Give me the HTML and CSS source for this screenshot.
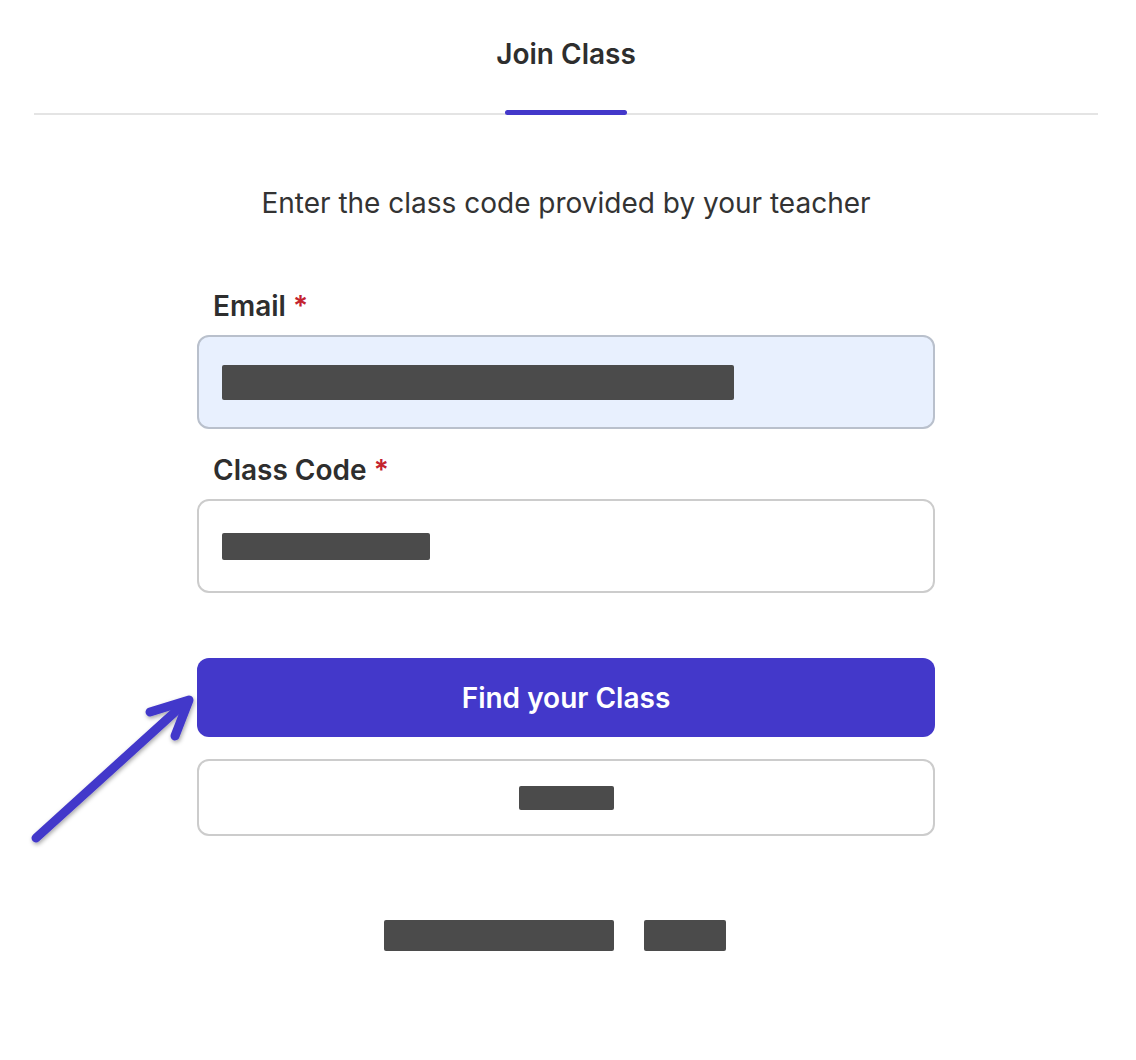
FILE: index.html
```html
<!DOCTYPE html>
<html lang="en">
  <head>
    <meta charset="UTF-8" />
    <meta name="viewport" content="width=device-width, initial-scale=1.0" />
    <title>Join Class</title>

    <link rel="stylesheet" href="styles.css">
  </head>
  <body>
    <div class="page">
      <div class="tabs">
        <div class="tab">
          <span class="tab-title">Join Class</span>
          <span class="tab-bar"></span>
        </div>
      </div>

      <p class="subtitle">Enter the class code provided by your teacher</p>

      <form class="join-form" onsubmit="return false">
        <label class="field-label">Email <span class="required">*</span></label>
        <div class="field field-filled">
          <span class="redacted" style="width: 512px"></span>
        </div>

        <label class="field-label label-code">Class Code <span class="required">*</span></label>
        <div class="field">
          <span class="redacted redacted-code" style="width: 208px"></span>
        </div>

        <button class="btn-primary" type="submit">Find your Class</button>
        <button class="btn-secondary" type="button">
          <span class="redacted redacted-small" style="width: 95px"></span>
        </button>
      </form>

      <div class="footer-links">
        <span class="redacted redacted-link" style="width: 230px"></span>
        <span class="redacted redacted-link" style="width: 82px"></span>
      </div>

      <svg class="arrow" width="1136" height="1060" viewBox="0 0 1136 1060">
        <defs>
          <filter id="shadow" x="-20%" y="-20%" width="140%" height="140%">
            <feDropShadow dx="1" dy="2" stdDeviation="2" flood-color="#000" flood-opacity="0.35" />
          </filter>
        </defs>
        <g fill="none" stroke="#4338ca" stroke-width="9" stroke-linecap="round" stroke-linejoin="round" filter="url(#shadow)">
          <path d="M36 838 L186 702" />
          <path d="M150 712 L189 700 L175 736" />
        </g>
      </svg>
    </div>
  </body>
</html>
```

FILE: styles.css
```css
body {
  margin: 0;
  font-family: Inter, "Noto Sans", sans-serif;
  color: #333333;
  background-color: white;
}

.page {
  position: relative;
  width: 1064px;
  height: 1060px;
  padding-left: 34px;
}

.tabs {
  display: flex;
  justify-content: center;
  padding-top: 38px;
  border-bottom: 2px solid #e4e4e4;
}

.tab {
  display: flex;
  flex-direction: column;
  align-items: center;
}

.tab-title {
  font-size: 28px;
  line-height: 32px;
  font-weight: 600;
  color: #2e2e2e;
}

.tab-bar {
  display: block;
  width: 122px;
  height: 5px;
  margin-top: 40px;
  margin-bottom: -2px;
  border-radius: 3px;
  background-color: #4338ca;
}

.subtitle {
  margin: 70px 0 0;
  text-align: center;
  font-size: 28px;
  line-height: 36px;
  color: #333333;
}

.join-form {
  display: flex;
  flex-direction: column;
  width: 738px;
  margin: 69px auto 0;
}

.field-label {
  padding-left: 16px;
  font-size: 28px;
  line-height: 32px;
  font-weight: 600;
  color: #2e2e2e;
}

.label-code {
  margin-top: 25px;
}

.required {
  color: #c4232f;
}

.field {
  display: flex;
  align-items: center;
  box-sizing: border-box;
  height: 94px;
  margin-top: 13px;
  padding-left: 23px;
  border: 2px solid #cccccc;
  border-radius: 12px;
  background-color: white;
}

.field-filled {
  border-color: #b9c0cc;
  background-color: #e8f0fe;
}

.redacted {
  display: inline-block;
  height: 35px;
  border-radius: 2px;
  background-color: #4b4b4b;
}

.redacted-code {
  height: 27px;
}

.redacted-small {
  height: 24px;
}

.redacted-link {
  height: 31px;
}

.btn-primary {
  height: 79px;
  margin-top: 65px;
  border: none;
  border-radius: 12px;
  background-color: #4338ca;
  color: white;
  font-family: inherit;
  font-size: 28px;
  font-weight: 600;
  cursor: pointer;
}

.btn-secondary {
  display: flex;
  align-items: center;
  justify-content: center;
  height: 77px;
  margin-top: 22px;
  border: 2px solid #cccccc;
  border-radius: 12px;
  background-color: white;
  cursor: pointer;
}

.footer-links {
  display: flex;
  justify-content: center;
  gap: 30px;
  margin-top: 84px;
  padding-right: 22px;
}

.arrow {
  position: absolute;
  left: 0;
  top: 0;
  pointer-events: none;
}
```
